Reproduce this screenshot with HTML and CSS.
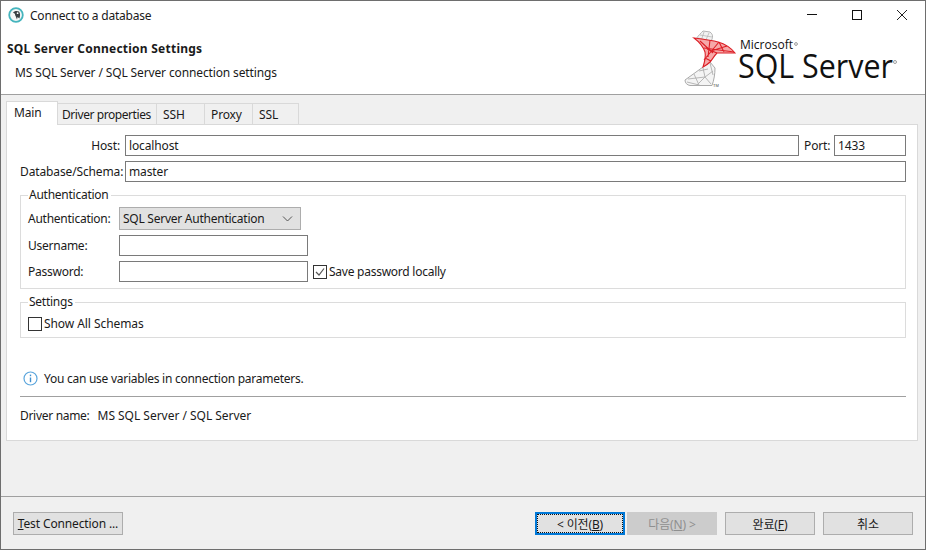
FILE: index.html
```html
<!DOCTYPE html>
<html lang="en">
<head>
    <meta charset="UTF-8">
    <meta name="viewport" content="width=device-width, initial-scale=1.0">
    <title>Connect to a database</title>
    <link rel="stylesheet" href="styles.css">
</head>
<body>
    <div class="window">
        <div class="titlebar">
            <svg class="app-icon" width="16" height="16" viewBox="0 0 16 16">
                <circle cx="8" cy="8" r="6.8" fill="#f4f6f6" stroke="#45b4bd" stroke-width="1.8"/>
                <path d="M5 5.5 C6 4 9 3.4 11 4.5 C12.4 6 12.4 9 11.4 11.6 L9.6 10 L9 12.4 L7.6 9 C6.6 8 7.6 6.4 6.4 6.4 Z" fill="#3a3f42"/>
                <circle cx="9.6" cy="6.2" r="0.9" fill="#fff"/>
            </svg>
            <span class="window-title">Connect to a database</span>
            <div class="window-controls">
                <svg width="12" height="12" viewBox="0 0 12 12"><path d="M1 5.5H11" stroke="#111" fill="none"/></svg>
                <svg width="12" height="12" viewBox="0 0 12 12"><rect x="1.5" y="1.5" width="9" height="9" stroke="#111" fill="none"/></svg>
                <svg width="12" height="12" viewBox="0 0 12 12"><path d="M1 1L11 11M11 1L1 11" stroke="#222" fill="none"/></svg>
            </div>
        </div>
        <div class="header">
            <div class="header-text">
                <div class="header-title">SQL Server Connection Settings</div>
                <div class="header-sub">MS SQL Server / SQL Server connection settings</div>
            </div>
            <svg class="logo" width="222" height="64" viewBox="0 0 222 64">
                <!-- ribbon: grey top, red middle, grey bottom, all as a lattice -->
                <path d="M26 1 L33 2 C37 5 36 9 32 14 L19 9 C21 6 24 3 26 1 Z" fill="#f2f2f2" stroke="#b4b4b4"/>
                <path d="M27 2 L24 11 M32 3 L28 12 M35 7 L23 5 M34 11 L21 8" stroke="#b8b8b8" stroke-width="0.8" fill="none"/>
                <path d="M26 37 L8 50 C8 53 10 55 13 55.5 L35 55.5 C37 50 38 44 38 38 L33 32 Z" fill="#f4f4f4" stroke="#aaaaaa"/>
                <path d="M11 49 L28 47 L34 54 M17 44 L22 55 M26 38 L28 47 L20 55 M36 41 L28 47 M33 33 L36 45 M10 52 L22 55 M22 41 L31 39" stroke="#b0b0b0" stroke-width="0.9" fill="none"/>
                <path d="M17 8 C25 9 34 10 41 12 C48 14 54 18 58 23 C52 23 46 23 40 23 C37 26 35 30 33 32 C31 34 28 36 26 37 C28 31 29 27 28 22 C26 16 21 11 17 8 Z" fill="#f6a8a8" stroke="#dc1f26" stroke-width="1.1"/>
                <path d="M23 11 L36 23 M33 10 L31 27 M42 12 L27 30 M50 16 L34 21 M27 18 L57 22 M40 23 L30 19 M28 28 L34 31 M42 12 L47 22" stroke="#dc1f26" stroke-width="1.1" fill="none"/>
                <text x="36" y="57" class="logo-tm">TM</text>
                <text x="63" y="19" class="logo-ms" textLength="53" lengthAdjust="spacingAndGlyphs">Microsoft</text>
                <circle cx="119" cy="14" r="1.4" fill="none" stroke="#555" stroke-width="0.6"/>
                <text x="61" y="48" class="logo-sql" textLength="155" lengthAdjust="spacingAndGlyphs">SQL Server</text>
                <circle cx="218" cy="32" r="1.5" fill="none" stroke="#777" stroke-width="0.7"/>
            </svg>
        </div>
        <div class="content">
            <div class="tabs">
                <div class="tab active">Main</div>
                <div class="tab tab-driver">Driver properties</div>
                <div class="tab tab-ssh">SSH</div>
                <div class="tab tab-ssh">Proxy</div>
                <div class="tab tab-ssl">SSL</div>
            </div>
            <div class="panel">
                <div class="row host-row">
                    <label class="lbl-main">Host:</label>
                    <input class="field grow" type="text" value="localhost">
                    <label class="lbl-port">Port:</label>
                    <input class="field port" type="text" value="1433">
                </div>
                <div class="row db-row">
                    <label class="lbl-main">Database/Schema:</label>
                    <input class="field grow" type="text" value="master">
                </div>
                <fieldset class="group auth-group">
                    <legend>Authentication</legend>
                    <div class="row auth-row">
                        <label class="lbl-auth">Authentication:</label>
                        <div class="select">
                            <span>SQL Server Authentication</span>
                            <svg width="11" height="6" viewBox="0 0 11 6"><path d="M1 0.5L5.5 5L10 0.5" stroke="#555" fill="none"/></svg>
                        </div>
                    </div>
                    <div class="row user-row">
                        <label class="lbl-auth">Username:</label>
                        <input class="field cred" type="text">
                    </div>
                    <div class="row pass-row">
                        <label class="lbl-auth">Password:</label>
                        <input class="field cred" type="text">
                        <svg class="check save-check" width="14" height="14" viewBox="0 0 14 14">
                            <rect x="0.5" y="0.5" width="13" height="13" fill="#fff" stroke="#333"/>
                            <path d="M3 7L6 10L11 3.5" stroke="#555" stroke-width="1.2" fill="none"/>
                        </svg>
                        <span>Save password locally</span>
                    </div>
                </fieldset>
                <fieldset class="group settings-group">
                    <legend>Settings</legend>
                    <div class="row schemas-row">
                        <span class="box"></span>
                        <span>Show All Schemas</span>
                    </div>
                </fieldset>
                <div class="info">
                    <svg width="15" height="15" viewBox="0 0 15 15">
                        <circle cx="7.5" cy="7.5" r="6.5" fill="#fff" stroke="#5aa5dc" stroke-width="1.2"/>
                        <path d="M7.5 6.5V11.2" stroke="#3f8fcf" stroke-width="1.4"/>
                        <path d="M7.5 3.6V5.2" stroke="#3f8fcf" stroke-width="1.4"/>
                    </svg>
                    <span>You can use variables in connection parameters.</span>
                </div>
                <div class="driver">
                    <span class="driver-label">Driver name:</span>
                    <span class="driver-value">MS SQL Server / SQL Server</span>
                </div>
            </div>
        </div>
        <div class="footer">
            <button class="btn test-btn" type="button"><u>T</u>est Connection ...</button>
            <div class="wizard-btns">
                <button class="btn focused" type="button">&lt; 이전(<u>B</u>)</button>
                <button class="btn disabled" type="button">다음(<u>N</u>) &gt;</button>
                <button class="btn" type="button">완료(<u>F</u>)</button>
                <button class="btn" type="button">취소</button>
            </div>
        </div>
    </div>
</body>
</html>
```

FILE: styles.css
```css
html, body {
    margin: 0;
    padding: 0;
}
body {
    font-family: "Noto Sans", "Noto Sans CJK KR", sans-serif;
    font-size: 12px;
    letter-spacing: -0.13px;
    color: #1a1a1a;
}
.window {
    width: 926px;
    height: 550px;
    box-sizing: border-box;
    border: 1px solid #6e6e6e;
    background-color: #f0f0f0;
    display: flex;
    flex-direction: column;
    overflow: hidden;
}
.titlebar {
    height: 29px;
    box-sizing: border-box;
    padding-bottom: 1px;
    background-color: #fff;
    display: flex;
    align-items: center;
    padding-left: 7px;
}
.window-title {
    margin-left: 6px;
    letter-spacing: -0.23px;
}
.window-controls {
    margin-left: auto;
    display: flex;
    gap: 33px;
    margin-right: 17px;
}
.header {
    height: 64px;
    background-color: #fff;
    border-bottom: 1px solid #a0a0a0;
    display: flex;
    justify-content: space-between;
}
.header-text {
    padding-left: 6px;
    padding-top: 10px;
}
.header-title {
    font-weight: bold;
    line-height: 18px;
    letter-spacing: 0.24px;
}
.header-sub {
    padding-left: 8px;
    margin-top: 6px;
    line-height: 17px;
}
.logo {
    margin-right: 26px;
}
.logo-tm {
    font-family: "Liberation Sans", sans-serif;
    font-size: 4px;
    letter-spacing: 0;
    fill: #444;
}
.logo-ms {
    font-family: "Open Sans", sans-serif;
    font-size: 12.5px;
    letter-spacing: 0;
    fill: #111;
}
.logo-sql {
    font-family: "Open Sans", sans-serif;
    font-size: 32.5px;
    letter-spacing: 0;
    fill: #111;
}
.content {
    padding: 6px 7px 0 5px;
}
.tabs {
    display: flex;
    align-items: flex-end;
    height: 23px;
    position: relative;
    z-index: 1;
}
.tab {
    height: 21px;
    line-height: 21px;
    box-sizing: border-box;
    border: 1px solid #d9d9d9;
    border-left: none;
    border-bottom: none;
    background-color: #f0f0f0;
    padding-left: 6px;
    white-space: nowrap;
}
.tab.active {
    width: 52px;
    height: 24px;
    line-height: 21px;
    background-color: #fff;
    border-left: 1px solid #d9d9d9;
    margin-bottom: -1px;
    padding-left: 7px;
}
.tab-driver {
    width: 99px;
    padding-left: 4px;
    letter-spacing: -0.43px;
}
.tab-ssh {
    width: 48px;
}
.tab-ssl {
    width: 46px;
}
.panel {
    height: 317px;
    box-sizing: border-box;
    background-color: #fff;
    border: 1px solid #d9d9d9;
    padding: 10px 11px 0 13px;
}
.row {
    display: flex;
    align-items: center;
}
.field {
    box-sizing: border-box;
    height: 21px;
    border: 1px solid #7a7a7a;
    padding: 0 3px;
    font: inherit;
    letter-spacing: inherit;
    color: inherit;
    background-color: #fff;
    outline: none;
}
.grow {
    flex: 1;
    min-width: 0;
}
.port {
    width: 72px;
}
.lbl-main {
    width: 100px;
    text-align: right;
    margin-right: 5px;
    white-space: nowrap;
}
.lbl-port {
    width: 25px;
    margin: 0 5px;
}
.db-row {
    margin-top: 5px;
}
.group {
    margin: 0;
    min-width: 0;
    border: 1px solid #dcdcdc;
    padding: 0 7px;
    letter-spacing: -0.25px;
}
.group legend {
    padding: 0 2px 0 1px;
    margin-left: 0;
    line-height: 16px;
}
.auth-group {
    margin-top: 5px;
    height: 102px;
    box-sizing: border-box;
}
.auth-row {
    margin-top: 4px;
}
.select {
    width: 182px;
    height: 23px;
    box-sizing: border-box;
    background-color: #e1e1e1;
    border: 1px solid #adadad;
    display: flex;
    align-items: center;
    justify-content: space-between;
    padding: 0 3px;
}
.select svg {
    margin-right: 4px;
}
.lbl-auth {
    width: 91px;
    white-space: nowrap;
}
.user-row {
    margin-top: 5px;
}
.pass-row {
    margin-top: 5px;
}
.cred {
    width: 189px;
}
.save-check {
    margin: 0 2px 0 5px;
}
.settings-group {
    margin-top: 5px;
    height: 44px;
    box-sizing: border-box;
}
.schemas-row {
    margin-top: 5px;
    letter-spacing: -0.07px;
}
.box {
    width: 14px;
    height: 14px;
    box-sizing: border-box;
    border: 1px solid #333;
    background-color: #fff;
    margin-right: 2px;
}
.info {
    display: flex;
    align-items: center;
    gap: 6px;
    margin-top: 32px;
    padding-left: 3px;
    height: 17px;
    letter-spacing: -0.26px;
}
.driver {
    margin-top: 9px;
    border-top: 1px solid #a0a0a0;
    padding-top: 10px;
    display: flex;
    gap: 8px;
}
.driver-label {
    letter-spacing: -0.3px;
}
.driver-value {
    letter-spacing: -0.02px;
}
.footer {
    margin-top: auto;
    height: 53px;
    box-sizing: border-box;
    border-top: 1px solid #a0a0a0;
    display: flex;
    justify-content: space-between;
    padding: 15px 12px 0 12px;
}
.btn {
    font: inherit;
    letter-spacing: inherit;
    color: #1a1a1a;
    width: 90px;
    height: 23px;
    box-sizing: border-box;
    background-color: #e1e1e1;
    border: 1px solid #adadad;
    padding: 0;
}
.test-btn {
    width: 110px;
}
.wizard-btns {
    display: flex;
    gap: 8px;
}
.focused {
    border: 2px solid #0078d7;
    outline: 1px dotted #111;
    outline-offset: -3px;
}
.disabled {
    background-color: #ccc;
    border-color: #ccc;
    color: #8f8f8f;
    margin-left: -6px;
}
```
